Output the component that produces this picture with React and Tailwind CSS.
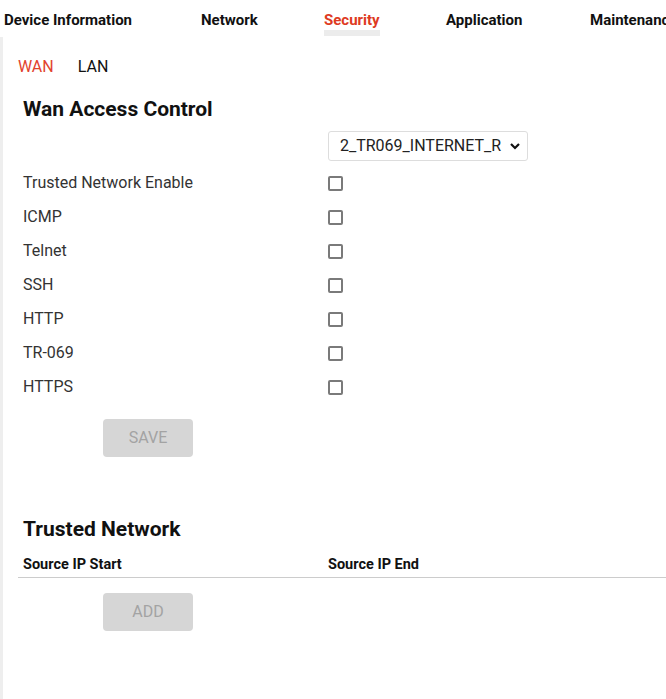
import React from "react";

const font = { fontFamily: 'Roboto, "Liberation Sans", sans-serif' };

function Checkbox() {
  return <div className="w-[15px] h-[15px] border-2 border-[#7a7a7a] rounded-[2px] bg-white" />;
}

function Row({ label }) {
  return (
    <div className="grid grid-cols-[305px_1fr] items-center h-[34px] pl-[5px]">
      <span className="text-[16px] text-[#333]">{label}</span>
      <Checkbox />
    </div>
  );
}

function GrayButton({ children }) {
  return (
    <div className="ml-[85px] w-[90px] h-[38px] rounded-[4px] bg-[#d6d6d6] flex items-center justify-center text-[16px] text-[#a3a3a3]">
      {children}
    </div>
  );
}

export default function App() {
  const navItems = [
    { label: "Device Information", w: "w-[197px]" },
    { label: "Network", w: "w-[123px]" },
    { label: "Security", w: "w-[122px]", active: true },
    { label: "Application", w: "w-[144px]" },
    { label: "Maintenance", w: "w-[120px]" },
  ];
  return (
    <div className="w-[666px] h-[699px] bg-white overflow-hidden flex flex-col" style={font}>
      <nav className="h-[37px] flex pl-[4px] whitespace-nowrap overflow-hidden">
        {navItems.map((n) => (
          <div key={n.label} className={`${n.w} shrink-0 flex flex-col items-start pt-[12px]`}>
            <span className={`inline-flex flex-col text-[15px] font-bold leading-[16px] ${n.active ? "text-[#de3a22]" : "text-[#111]"}`}>
              {n.label}
              <span className={`mt-[2px] h-[6px] ${n.active ? "bg-[#ececec]" : ""}`} />
            </span>
          </div>
        ))}
      </nav>
      <div className="flex-1 border-l-[3px] border-[#eeeeee] pl-[15px]">
        <div className="flex gap-[24px] text-[16px] leading-[24px] pt-[18px]">
          <span className="text-[#e2432e]">WAN</span>
          <span className="text-[#111]">LAN</span>
        </div>
        <h2 className="pl-[5px] mt-[16px] text-[21px] font-bold leading-[28px] text-[#111]">Wan Access Control</h2>
        <div className="grid grid-cols-[305px_1fr] pl-[5px] mt-[8px]">
          <span />
          <div className="w-[200px] h-[30px] border border-[#dddddd] rounded-[3px] flex items-center justify-between pl-[11px] pr-[6px] text-[16px] text-[#222]">
            <span>2_TR069_INTERNET_R</span>
            <svg width="12" height="12" viewBox="0 0 12 12">
              <path d="M2 4 L6 8 L10 4" fill="none" stroke="#111" strokeWidth="2.2" />
            </svg>
          </div>
        </div>
        <div className="mt-[5px]">
          {["Trusted Network Enable", "ICMP", "Telnet", "SSH", "HTTP", "TR-069", "HTTPS"].map((l) => (
            <Row key={l} label={l} />
          ))}
        </div>
        <div className="mt-[15px]">
          <GrayButton>SAVE</GrayButton>
        </div>
        <h2 className="pl-[5px] mt-[58px] text-[21px] font-bold leading-[28px] text-[#111]">Trusted Network</h2>
        <div className="grid grid-cols-[305px_1fr] pl-[5px] mt-[10px] pt-[2px] pb-[2px] leading-[20px] items-center border-b border-[#cccccc] text-[14.5px] font-bold text-[#111]">
          <span>Source IP Start</span>
          <span>Source IP End</span>
        </div>
        <div className="mt-[15px]">
          <GrayButton>ADD</GrayButton>
        </div>
      </div>
    </div>
  );
}
